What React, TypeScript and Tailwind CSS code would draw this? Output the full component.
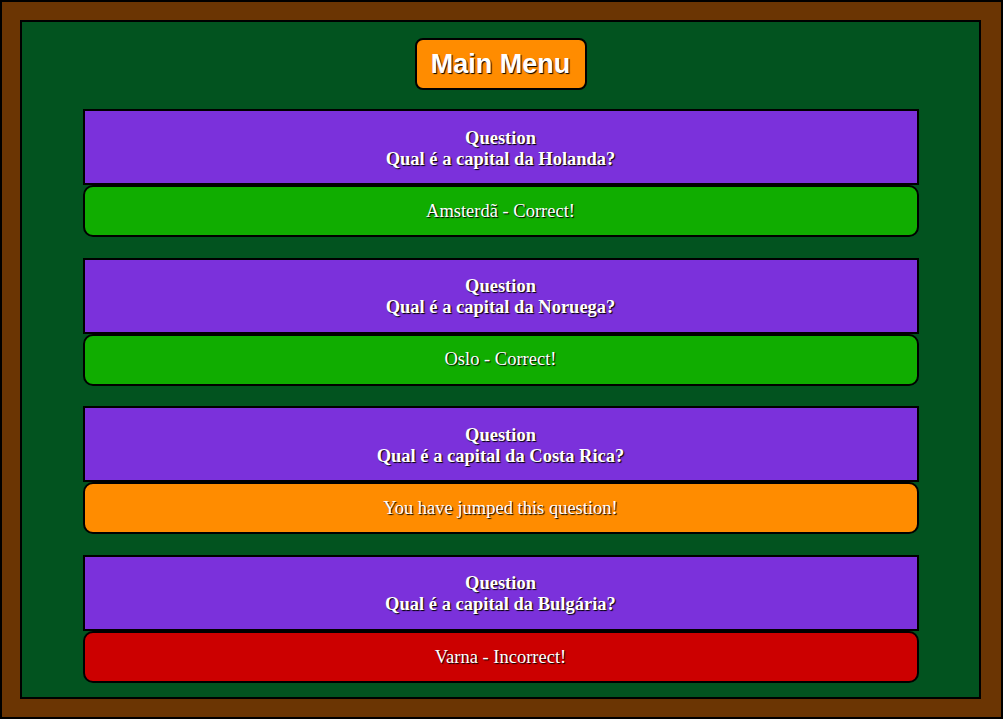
const results = [
  { question: 'Qual é a capital da Holanda?', answer: 'Amsterdã - Correct!', bg: 'bg-[#10ad00]' },
  { question: 'Qual é a capital da Noruega?', answer: 'Oslo - Correct!', bg: 'bg-[#10ad00]' },
  { question: 'Qual é a capital da Costa Rica?', answer: 'You have jumped this question!', bg: 'bg-[#ff8c00]' },
  { question: 'Qual é a capital da Bulgária?', answer: 'Varna - Incorrect!', bg: 'bg-[#cc0000]' },
];

export default function App() {
  return (
    <div className="h-[719px] w-[1003px] border-2 border-black bg-[#6b3503] pb-[18px] pl-[18px] pr-[20px] pt-[18px] font-['Liberation_Serif',serif]">
      <div className="flex h-full flex-col items-center border-2 border-black bg-[#02531f]">
        <button className="mt-4 flex h-[52px] w-[172px] items-center justify-center rounded-lg border-2 border-black bg-[#ff8c00] font-['Liberation_Sans',Arial,sans-serif] text-[27px] font-bold text-white [text-shadow:1px_1px_1px_#000]">
          Main Menu
        </button>

        <div className="mt-[19px] flex w-[836px] flex-col gap-[20.67px]">
          {results.map(({ question, answer, bg }) => (
            <div key={question} className="flex flex-col">
              <div className="flex h-[76px] flex-col items-center justify-center border-2 border-black bg-[#7b31db] pt-[3px] text-[18.5px] font-bold leading-[21px] text-white [text-shadow:1px_1px_1px_#000]">
                <p>Question</p>
                <p>{question}</p>
              </div>
              <div className={`flex h-[52px] items-center justify-center rounded-[10px] border-2 border-black ${bg} pt-px text-[18.5px] text-white [text-shadow:1px_1px_1px_#000]`}>
                {answer}
              </div>
            </div>
          ))}
        </div>
      </div>
    </div>
  );
}
